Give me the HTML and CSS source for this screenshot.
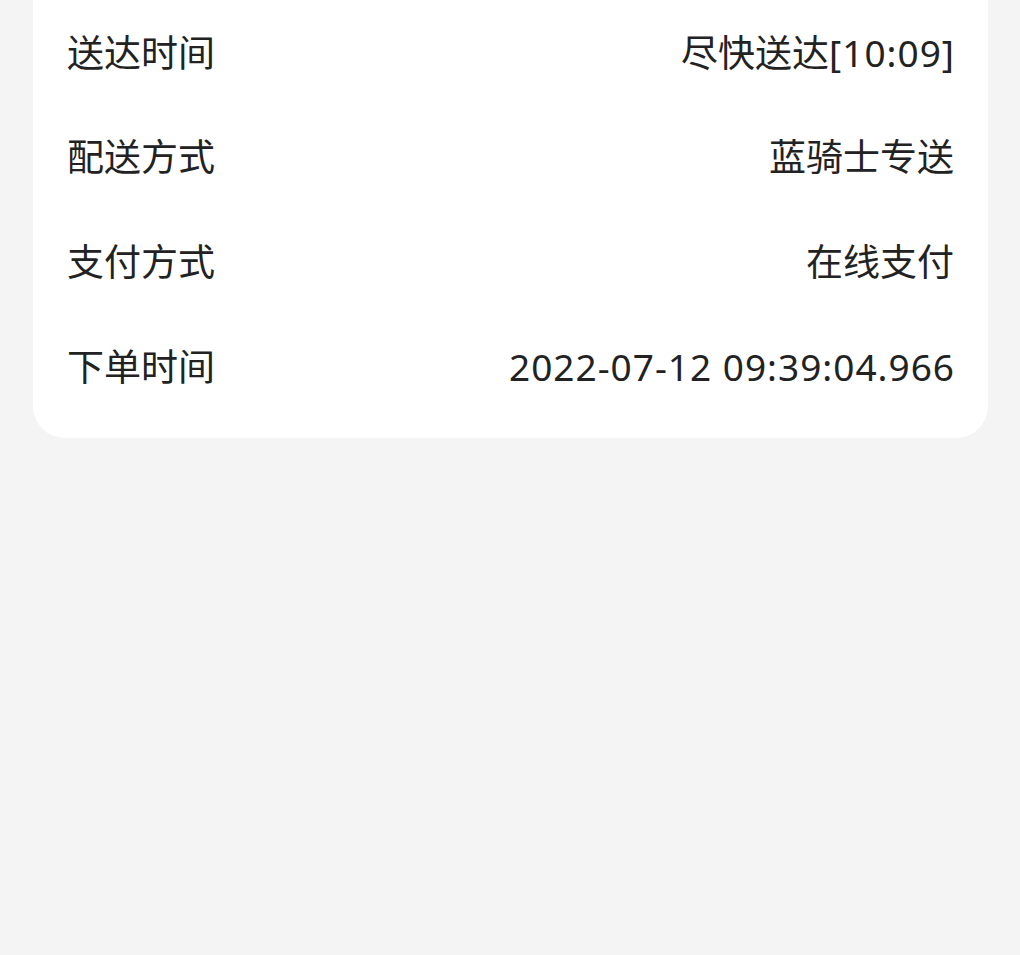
FILE: index.html
```html
<!DOCTYPE html>
<html lang="zh-CN">
<head>
<meta charset="utf-8">
<link rel="stylesheet" href="styles.css">
</head>
<body>
<div class="card">
  <div class="row"><span class="label">送达时间</span><span class="value">尽快送达<span class="num">[10:09]</span></span></div>
  <div class="row"><span class="label">配送方式</span><span class="value">蓝骑士专送</span></div>
  <div class="row"><span class="label">支付方式</span><span class="value">在线支付</span></div>
  <div class="row"><span class="label">下单时间</span><span class="value num">2022-07-12 09:39:04.966</span></div>
</div>
</body>
</html>
```
FILE: styles.css
```css
html, body {
  margin: 0;
  padding: 0;
  background: #f4f4f4;
  height: 100%;
}
body {
  font-family: "Noto Sans", "Noto Sans CJK SC", sans-serif;
  color: #222222;
}
.card {
  margin: 0 32px 0 33px;
  background: #ffffff;
  border-radius: 0 0 32px 32px;
  padding: 0 34px 20px 34px;
}
.row {
  display: flex;
  justify-content: space-between;
  align-items: center;
  height: 104.6px;
  font-size: 37px;
}
.label, .value {
  line-height: 1;
  white-space: nowrap;
}
.num {
  letter-spacing: 1px;
  margin-right: -1px;
}
```
